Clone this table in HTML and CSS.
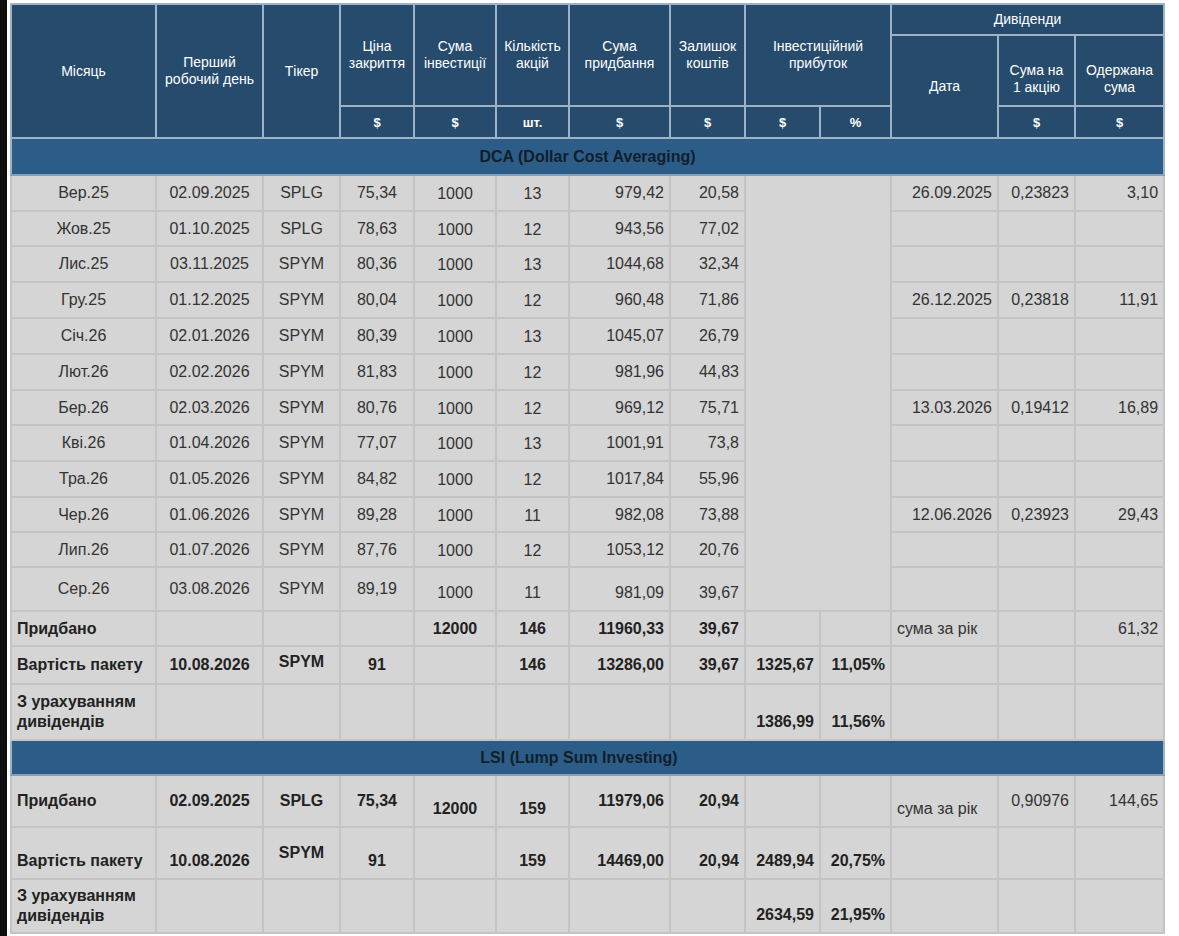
FILE: index.html
```html
<!DOCTYPE html>
<html lang="uk">
<head>
<meta charset="utf-8">
<title>DCA vs LSI</title>
<link rel="stylesheet" href="styles.css">
</head>
<body>
<table class="grid">
<colgroup>
<col class="w1"><col class="w2"><col class="w3"><col class="w4"><col class="w5"><col class="w6"><col class="w7"><col class="w8"><col class="w9"><col class="w10"><col class="w11"><col class="w12"><col class="w13">
</colgroup>
<thead>
<tr class="h1">
<th rowspan="3">Місяць</th>
<th rowspan="3">Перший<br>робочий день</th>
<th rowspan="3">Тікер</th>
<th rowspan="2">Ціна<br>закриття</th>
<th rowspan="2">Сума<br>інвестиції</th>
<th rowspan="2">Кількість<br>акцій</th>
<th rowspan="2">Сума<br>придбання</th>
<th rowspan="2">Залишок<br>коштів</th>
<th rowspan="2" colspan="2">Інвестиційний<br>прибуток</th>
<th colspan="3">Дивіденди</th>
</tr>
<tr class="h2">
<th rowspan="2">Дата</th>
<th class="low">Сума на<br>1 акцію</th>
<th class="low">Одержана<br>сума</th>
</tr>
<tr class="h3">
<th class="u">$</th><th class="u">$</th><th class="u">шт.</th><th class="u">$</th><th class="u">$</th><th class="u">$</th><th class="u">%</th><th class="u">$</th><th class="u">$</th>
</tr>
</thead>
<tbody>
<tr class="sec s-dca"><td colspan="13">DCA (Dollar Cost Averaging)</td></tr>
<tr class="r36"><td>Вер.25</td><td>02.09.2025</td><td>SPLG</td><td>75,34</td><td class="lo">1000</td><td class="lo">13</td><td class="r">979,42</td><td class="r">20,58</td><td rowspan="12" colspan="2"></td><td class="r">26.09.2025</td><td class="r">0,23823</td><td class="r">3,10</td></tr>
<tr class="r35"><td>Жов.25</td><td>01.10.2025</td><td>SPLG</td><td>78,63</td><td class="lo">1000</td><td class="lo">12</td><td class="r">943,56</td><td class="r">77,02</td><td></td><td></td><td></td></tr>
<tr class="r36"><td>Лис.25</td><td>03.11.2025</td><td>SPYM</td><td>80,36</td><td class="lo">1000</td><td class="lo">13</td><td class="r">1044,68</td><td class="r">32,34</td><td></td><td></td><td></td></tr>
<tr class="r36"><td>Гру.25</td><td>01.12.2025</td><td>SPYM</td><td>80,04</td><td class="lo">1000</td><td class="lo">12</td><td class="r">960,48</td><td class="r">71,86</td><td class="r">26.12.2025</td><td class="r">0,23818</td><td class="r">11,91</td></tr>
<tr class="r36"><td>Січ.26</td><td>02.01.2026</td><td>SPYM</td><td>80,39</td><td class="lo">1000</td><td class="lo">13</td><td class="r">1045,07</td><td class="r">26,79</td><td></td><td></td><td></td></tr>
<tr class="r36"><td>Лют.26</td><td>02.02.2026</td><td>SPYM</td><td>81,83</td><td class="lo">1000</td><td class="lo">12</td><td class="r">981,96</td><td class="r">44,83</td><td></td><td></td><td></td></tr>
<tr class="r35"><td>Бер.26</td><td>02.03.2026</td><td>SPYM</td><td>80,76</td><td class="lo">1000</td><td class="lo">12</td><td class="r">969,12</td><td class="r">75,71</td><td class="r">13.03.2026</td><td class="r">0,19412</td><td class="r">16,89</td></tr>
<tr class="r36"><td>Кві.26</td><td>01.04.2026</td><td>SPYM</td><td>77,07</td><td class="lo">1000</td><td class="lo">13</td><td class="r">1001,91</td><td class="r">73,8</td><td></td><td></td><td></td></tr>
<tr class="r36"><td>Тра.26</td><td>01.05.2026</td><td>SPYM</td><td>84,82</td><td class="lo">1000</td><td class="lo">12</td><td class="r">1017,84</td><td class="r">55,96</td><td></td><td></td><td></td></tr>
<tr class="r35"><td>Чер.26</td><td>01.06.2026</td><td>SPYM</td><td>89,28</td><td class="lo">1000</td><td class="lo">11</td><td class="r">982,08</td><td class="r">73,88</td><td class="r">12.06.2026</td><td class="r">0,23923</td><td class="r">29,43</td></tr>
<tr class="r35"><td>Лип.26</td><td>01.07.2026</td><td>SPYM</td><td>87,76</td><td class="lo">1000</td><td class="lo">12</td><td class="r">1053,12</td><td class="r">20,76</td><td></td><td></td><td></td></tr>
<tr class="r44"><td>Сер.26</td><td>03.08.2026</td><td>SPYM</td><td>89,19</td><td class="bot">1000</td><td class="bot">11</td><td class="r bot">981,09</td><td class="r bot">39,67</td><td></td><td></td><td></td></tr>
<tr class="r35 bold"><td class="l">Придбано</td><td></td><td></td><td></td><td>12000</td><td>146</td><td class="r">11960,33</td><td class="r">39,67</td><td></td><td></td><td class="l norm">сума за рік</td><td></td><td class="r norm">61,32</td></tr>
<tr class="r38 bold"><td class="l">Вартість пакету</td><td>10.08.2026</td><td class="hi">SPYM</td><td>91</td><td></td><td>146</td><td class="r">13286,00</td><td class="r">39,67</td><td class="r">1325,67</td><td class="r">11,05%</td><td></td><td></td><td></td></tr>
<tr class="r56 bold"><td class="l two">З урахуванням<br>дивідендів</td><td></td><td></td><td></td><td></td><td></td><td></td><td></td><td class="r bot">1386,99</td><td class="r bot">11,56%</td><td></td><td></td><td></td></tr>
<tr class="sec s-lsi"><td colspan="13">LSI (Lump Sum Investing)</td></tr>
<tr class="r52 bold"><td class="l">Придбано</td><td>02.09.2025</td><td>SPLG</td><td>75,34</td><td class="bot">12000</td><td class="bot">159</td><td class="r">11979,06</td><td class="r">20,94</td><td></td><td></td><td class="l norm bot">сума за рік</td><td class="r norm">0,90976</td><td class="r norm">144,65</td></tr>
<tr class="r52 bold"><td class="l bot">Вартість пакету</td><td class="bot">10.08.2026</td><td>SPYM</td><td class="bot">91</td><td></td><td class="bot">159</td><td class="r bot">14469,00</td><td class="r bot">20,94</td><td class="r bot">2489,94</td><td class="r bot">20,75%</td><td></td><td></td><td></td></tr>
<tr class="r54 bold"><td class="l two">З урахуванням<br>дивідендів</td><td></td><td></td><td></td><td></td><td></td><td></td><td></td><td class="r bot">2634,59</td><td class="r bot">21,95%</td><td></td><td></td><td></td></tr>
</tbody>
</table>
</body>
</html>
```

FILE: styles.css
```css
html, body {
  margin: 0;
  padding: 0;
  background: #ffffff;
}
body {
  border-left: 7px solid #0e0e0e;
  padding: 3px 0 0 3px;
  min-height: 936px;
  box-sizing: border-box;
  font-family: "Liberation Sans", Arial, sans-serif;
}
.grid {
  border-collapse: collapse;
  table-layout: fixed;
  width: 1153px;
}
.w1 { width: 145px; }
.w2 { width: 107px; }
.w3 { width: 77px; }
.w4 { width: 74px; }
.w5 { width: 82px; }
.w6 { width: 73px; }
.w7 { width: 101px; }
.w8 { width: 75px; }
.w9 { width: 75px; }
.w10 { width: 71px; }
.w11 { width: 107px; }
.w12 { width: 77px; }
.w13 { width: 89px; }

thead th {
  background: #264b6c;
  color: #ffffff;
  font-weight: normal;
  font-size: 14px;
  line-height: 17px;
  border: 2px solid #9fb3c6;
  padding: 0 2px;
  text-align: center;
  vertical-align: middle;
}
thead th.u {
  font-weight: bold;
  font-size: 13px;
}
thead th.low {
  padding-top: 16px;
}
.h1 { height: 31px; }
.h2 { height: 71px; }
.h3 { height: 32px; }

tbody td {
  background: #d5d5d5;
  color: #333333;
  font-size: 16px;
  line-height: 18px;
  border: 2px solid #c4c4c4;
  padding: 0 5px;
  text-align: center;
  vertical-align: middle;
  white-space: nowrap;
}
tbody td.r { text-align: right; }
tbody td.l { text-align: left; }
tbody td.two { line-height: 20px; }
tbody td.lo { padding-top: 2px; }
tbody td.bot { vertical-align: bottom; padding-bottom: 8px; }
tbody td.hi { padding-bottom: 6px; }
tbody tr.bold td { font-weight: bold; color: #222222; }
tbody tr.bold td.norm { font-weight: normal; color: #333333; }

tbody tr.sec td {
  background: #2c5d88;
  color: #121e2b;
  font-weight: bold;
  font-size: 16px;
  border-top: 2px solid #9fb3c6;
  border-bottom: 2px solid #8aa0b4;
  border-left: 2px solid #9fb3c6;
  border-right: 2px solid #9fb3c6;
}
.s-dca { height: 37px; }
.s-lsi { height: 35px; }
.s-lsi td { padding-right: 22px; }

.r35 { height: 35px; }
.r36 { height: 36px; }
.r38 { height: 38px; }
.r44 { height: 44px; }
.r52 { height: 52px; }
.r54 { height: 54px; }
.r56 { height: 56px; }
```
